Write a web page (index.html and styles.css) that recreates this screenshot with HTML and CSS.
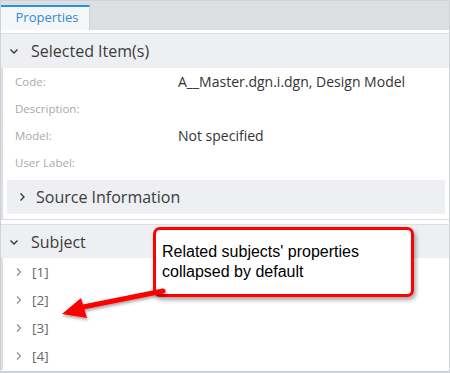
FILE: index.html
```html
<!DOCTYPE html>
<html lang="en">
<head>
  <meta charset="UTF-8" />
  <title>Properties</title>
  <link rel="stylesheet" href="styles.css">
</head>
<body>

  <div class="panel">
    <div class="tab-bar">
      <div class="tab active">Properties</div>
    </div>

    <div class="section">
      <div class="section-header">
        <svg class="chev" width="10" height="10" viewBox="0 0 10 10"><path d="M1.5 3.5 L5 7 L8.5 3.5" /></svg>
        <span>Selected Item(s)</span>
      </div>
      <div class="prop-row"><span class="label">Code:</span><span class="value">A__Master.dgn.i.dgn, Design Model</span></div>
      <div class="prop-row"><span class="label">Description:</span><span class="value"></span></div>
      <div class="prop-row"><span class="label">Model:</span><span class="value">Not specified</span></div>
      <div class="prop-row"><span class="label">User Label:</span><span class="value"></span></div>
      <div class="sub-header">
        <svg class="chev" width="10" height="10" viewBox="0 0 10 10"><path d="M3.5 1.5 L7 5 L3.5 8.5" /></svg>
        <span>Source Information</span>
      </div>
    </div>

    <div class="section subject">
      <div class="section-header">
        <svg class="chev" width="10" height="10" viewBox="0 0 10 10"><path d="M1.5 3.5 L5 7 L8.5 3.5" /></svg>
        <span>Subject</span>
      </div>
      <div class="item"><svg class="chev small" width="8" height="10" viewBox="0 0 8 10"><path d="M2 1.5 L5.5 5 L2 8.5" /></svg>[1]</div>
      <div class="item"><svg class="chev small" width="8" height="10" viewBox="0 0 8 10"><path d="M2 1.5 L5.5 5 L2 8.5" /></svg>[2]</div>
      <div class="item"><svg class="chev small" width="8" height="10" viewBox="0 0 8 10"><path d="M2 1.5 L5.5 5 L2 8.5" /></svg>[3]</div>
      <div class="item"><svg class="chev small" width="8" height="10" viewBox="0 0 8 10"><path d="M2 1.5 L5.5 5 L2 8.5" /></svg>[4]</div>
    </div>

    <!-- annotation callout -->
    <div class="callout">Related subjects' properties collapsed by default</div>
    <svg class="arrow" width="110" height="40" viewBox="0 0 110 40">
      <defs>
        <filter id="sh" x="-20%" y="-50%" width="140%" height="200%">
          <feDropShadow dx="1" dy="2" stdDeviation="1.5" flood-color="#000" flood-opacity="0.35" />
        </filter>
      </defs>
      <g filter="url(#sh)">
        <path d="M104 7 L24 23" stroke="#f00" stroke-width="5" stroke-linecap="round" fill="none" />
        <path d="M3 30 L22 14 L28 34 Z" fill="#f00" />
      </g>
    </svg>
  </div>

</body>
</html>
```

FILE: styles.css
```css
body {
  margin: 0;
  font-family: "Open Sans", sans-serif;
  background: #fff;
}

.panel {
  position: relative;
  width: 450px;
  height: 373px;
  box-sizing: border-box;
  border: 1px solid #cfd3d7;
  border-bottom-width: 2px;
  overflow: hidden;
}

.tab-bar {
  height: 29px;
  background: #dcdfe2;
  display: flex;
}

.tab {
  width: 89px;
  box-sizing: border-box;
  border-top: 2px solid #2c8ee0;
  margin-top: 4px;
  background: #f5f6f7;
  background-clip: padding-box;
  color: #2d8bd8;
  font-size: 13px;
  text-align: center;
  line-height: 21px;
  border-right: 1px solid #cfd3d7;
  padding-left: 4px;
}

.section {
  margin-top: 3px;
  border-top: 1px solid #dcdfe2;
  border-left: 2px solid #dcdfe2;
  padding-bottom: 5px;
  border-bottom: 1px solid #dcdfe2;
}

.section-header {
  height: 34px;
  background: #eeeff2;
  display: flex;
  align-items: center;
  font-size: 16px;
  color: #3b3b3b;
  margin-left: -2px;
}

.section-header .chev {
  margin-left: 8px;
  margin-right: 12px;
}

.chev path {
  fill: none;
  stroke: #333;
  stroke-width: 1.3;
}

.prop-row {
  height: 27px;
  display: flex;
  align-items: center;
}

.label {
  width: 163px;
  padding-left: 12px;
  font-size: 11.5px;
  color: #a9a9a9;
}

.value {
  font-size: 14px;
  color: #333;
}

.sub-header {
  height: 34px;
  margin: 4px 4px 0 4px;
  background: #eeeff2;
  display: flex;
  align-items: center;
  font-size: 16px;
  color: #3b3b3b;
}

.sub-header .chev {
  margin-left: 10px;
  margin-right: 9px;
}

.subject {
  margin-top: 4px;
  border-bottom: none;
  padding-bottom: 0;
}

.subject .section-header {
  height: 33px;
}

.item {
  height: 28px;
  display: flex;
  align-items: center;
  font-size: 13.5px;
  color: #666;
}

.chev.small {
  margin-left: 12px;
  margin-right: 9px;
}

.chev.small path {
  stroke: #888;
  stroke-width: 1.1;
}

.callout {
  position: absolute;
  left: 152px;
  top: 226px;
  width: 261px;
  height: 70px;
  box-sizing: border-box;
  border: 3px solid #f00;
  border-radius: 7px;
  background: #fff;
  padding: 12px 6px 8px;
  font-family: "Liberation Sans", Arial, sans-serif;
  font-size: 16px;
  line-height: 20px;
  color: #000;
  box-shadow: 2px 3px 4px rgba(0, 0, 0, 0.35);
}

.arrow {
  position: absolute;
  left: 58px;
  top: 283px;
}
```
